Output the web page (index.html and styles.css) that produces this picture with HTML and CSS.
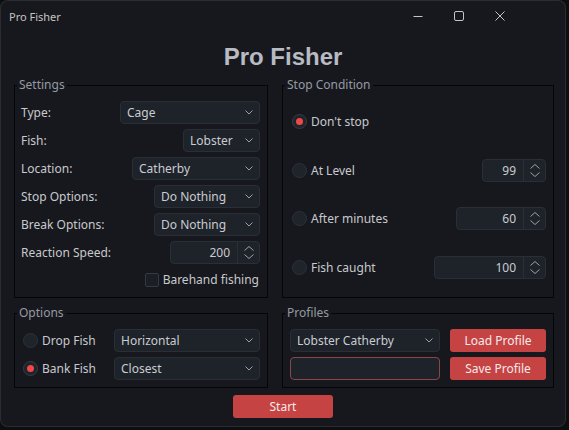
FILE: index.html
```html
<!DOCTYPE html>
<html>
<head>
<meta charset="utf-8">
<title>Pro Fisher</title>
<link rel="stylesheet" href="styles.css">
</head>
<body>
<div class="window">
  <div class="titlebar">
    <span class="title-text">Pro Fisher</span>
    <div class="controls">
      <div class="ctl"><svg width="10" height="10" viewBox="0 0 10 10"><line x1="0.5" y1="5.5" x2="9.5" y2="5.5" stroke="#c4c4c4" stroke-width="1"/></svg></div>
      <div class="ctl"><svg width="10" height="10" viewBox="0 0 10 10"><rect x="0.5" y="0.5" width="9" height="9" rx="1.5" fill="none" stroke="#c4c4c4" stroke-width="1"/></svg></div>
      <div class="ctl"><svg width="10" height="10" viewBox="0 0 10 10"><path d="M0.5 0.5 L9.5 9.5 M9.5 0.5 L0.5 9.5" stroke="#c4c4c4" stroke-width="1"/></svg></div>
    </div>
  </div>

  <h1 class="app-title">Pro Fisher</h1>

  <div class="main">
    <fieldset class="group tall">
      <legend>Settings</legend>
      <div class="settings-inner">
        <div class="row"><span class="label">Type:</span>
          <div class="combo w-type"><span class="val">Cage</span><svg class="chev" viewBox="0 0 8 5"><polyline points="0.5,0.5 4,4 7.5,0.5" fill="none" stroke="#9ca1a9" stroke-width="1"/></svg></div></div>
        <div class="row"><span class="label">Fish:</span>
          <div class="combo w-fish"><span class="val">Lobster</span><svg class="chev" viewBox="0 0 8 5"><polyline points="0.5,0.5 4,4 7.5,0.5" fill="none" stroke="#9ca1a9" stroke-width="1"/></svg></div></div>
        <div class="row"><span class="label">Location:</span>
          <div class="combo w-loc"><span class="val">Catherby</span><svg class="chev" viewBox="0 0 8 5"><polyline points="0.5,0.5 4,4 7.5,0.5" fill="none" stroke="#9ca1a9" stroke-width="1"/></svg></div></div>
        <div class="row"><span class="label">Stop Options:</span>
          <div class="combo w-opt"><span class="val">Do Nothing</span><svg class="chev" viewBox="0 0 8 5"><polyline points="0.5,0.5 4,4 7.5,0.5" fill="none" stroke="#9ca1a9" stroke-width="1"/></svg></div></div>
        <div class="row"><span class="label">Break Options:</span>
          <div class="combo w-opt"><span class="val">Do Nothing</span><svg class="chev" viewBox="0 0 8 5"><polyline points="0.5,0.5 4,4 7.5,0.5" fill="none" stroke="#9ca1a9" stroke-width="1"/></svg></div></div>
        <div class="row"><span class="label">Reaction Speed:</span>
          <div class="spin w-react"><span class="num">200</span>
            <div class="arrows">
              <svg class="sarrow" viewBox="0 0 10 5"><polyline points="0.5,4.5 5,0.5 9.5,4.5" fill="none" stroke="#9ca1a9" stroke-width="1"/></svg>
              <svg class="sarrow" viewBox="0 0 10 5"><polyline points="0.5,0.5 5,4.5 9.5,0.5" fill="none" stroke="#9ca1a9" stroke-width="1"/></svg>
            </div></div></div>
        <div class="check-row"><span class="checkbox"></span><span class="check-label">Barehand fishing</span></div>
      </div>
    </fieldset>

    <fieldset class="group tall">
      <legend>Stop Condition</legend>
      <div class="stop-inner">
        <div class="row"><span class="radio on"></span><span class="radio-label">Don't stop</span></div>
        <div class="row"><span class="radio"></span><span class="radio-label">At Level</span>
          <div class="spin w-level"><span class="num">99</span>
            <div class="arrows">
              <svg class="sarrow" viewBox="0 0 10 5"><polyline points="0.5,4.5 5,0.5 9.5,4.5" fill="none" stroke="#9ca1a9" stroke-width="1"/></svg>
              <svg class="sarrow" viewBox="0 0 10 5"><polyline points="0.5,0.5 5,4.5 9.5,0.5" fill="none" stroke="#9ca1a9" stroke-width="1"/></svg>
            </div></div></div>
        <div class="row"><span class="radio"></span><span class="radio-label">After minutes</span>
          <div class="spin w-min"><span class="num">60</span>
            <div class="arrows">
              <svg class="sarrow" viewBox="0 0 10 5"><polyline points="0.5,4.5 5,0.5 9.5,4.5" fill="none" stroke="#9ca1a9" stroke-width="1"/></svg>
              <svg class="sarrow" viewBox="0 0 10 5"><polyline points="0.5,0.5 5,4.5 9.5,0.5" fill="none" stroke="#9ca1a9" stroke-width="1"/></svg>
            </div></div></div>
        <div class="row"><span class="radio"></span><span class="radio-label">Fish caught</span>
          <div class="spin w-caught"><span class="num">100</span>
            <div class="arrows">
              <svg class="sarrow" viewBox="0 0 10 5"><polyline points="0.5,4.5 5,0.5 9.5,4.5" fill="none" stroke="#9ca1a9" stroke-width="1"/></svg>
              <svg class="sarrow" viewBox="0 0 10 5"><polyline points="0.5,0.5 5,4.5 9.5,0.5" fill="none" stroke="#9ca1a9" stroke-width="1"/></svg>
            </div></div></div>
      </div>
    </fieldset>

    <fieldset class="group short">
      <legend>Options</legend>
      <div class="options-inner">
        <div class="row"><span class="radio"></span><span class="radio-label">Drop Fish</span>
          <div class="combo w-drop"><span class="val">Horizontal</span><svg class="chev" viewBox="0 0 8 5"><polyline points="0.5,0.5 4,4 7.5,0.5" fill="none" stroke="#9ca1a9" stroke-width="1"/></svg></div></div>
        <div class="row"><span class="radio on"></span><span class="radio-label">Bank Fish</span>
          <div class="combo w-drop"><span class="val">Closest</span><svg class="chev" viewBox="0 0 8 5"><polyline points="0.5,0.5 4,4 7.5,0.5" fill="none" stroke="#9ca1a9" stroke-width="1"/></svg></div></div>
      </div>
    </fieldset>

    <fieldset class="group short">
      <legend>Profiles</legend>
      <div class="profiles-inner">
        <div class="combo"><span class="val">Lobster Catherby</span><svg class="chev" viewBox="0 0 8 5"><polyline points="0.5,0.5 4,4 7.5,0.5" fill="none" stroke="#9ca1a9" stroke-width="1"/></svg></div>
        <button class="btn">Load Profile</button>
        <div class="text-input"></div>
        <button class="btn">Save Profile</button>
      </div>
    </fieldset>
  </div>

  <div class="footer"><button class="btn start">Start</button></div>
</div>
</body>
</html>
```
FILE: styles.css
```css
* { box-sizing: border-box; }
html, body { margin: 0; padding: 0; }
body {
  width: 569px;
  height: 430px;
  overflow: hidden;
  background: #0d0e10;
  font-family: "Noto Sans", "Open Sans", sans-serif;
  font-size: 12px;
  color: #c7c9cd;
}
.window {
  width: 566px;
  height: 427px;
  background: #17181d;
  border-radius: 8px;
  box-shadow: inset 0 0 0 1px #2b2c31;
  display: flex;
  flex-direction: column;
}
.titlebar {
  height: 31px;
  display: flex;
  align-items: center;
  padding-left: 9px;
}
.title-text {
  font-size: 11px;
  color: #c4c4c4;
  line-height: 14px;
  padding-top: 2px;
}
.controls {
  margin-left: auto;
  margin-right: 46px;
  display: flex;
}
.ctl {
  width: 41px;
  height: 31px;
  display: flex;
  align-items: center;
  justify-content: center;
}
.app-title {
  margin: 12px 0 6px;
  font: bold 24px/28px "Liberation Sans", Arial, sans-serif;
  color: #b7bbc3;
  text-align: center;
}
.main {
  display: grid;
  grid-template-columns: 254px 272px;
  column-gap: 14px;
  row-gap: 7px;
  padding: 0 12px 0 14px;
}
.group {
  margin: 0;
  padding: 0;
  min-width: 0;
  border: 1px solid #050507;
}
.group legend {
  margin-left: 2px;
  padding: 0 2px;
  font-size: 12px;
  line-height: 16px;
  color: #959aa2;
}
.tall { height: 221px; }
.short { height: 83px; }

.row {
  display: flex;
  align-items: center;
  height: 23px;
}
.settings-inner {
  display: flex;
  flex-direction: column;
  gap: 5px;
  padding: 8px 7px 0 6px;
}
.label { flex: 1; }

.combo {
  height: 23px;
  background: #1e2229;
  border: 1px solid #2a2e36;
  border-radius: 4px;
  display: flex;
  align-items: center;
  padding: 0 6px 0 6px;
  color: #c9ccd1;
  margin-left: auto;
}
.combo .val { flex: 1; white-space: nowrap; }
.chev { width: 8px; height: 5px; flex: none; }
.w-type { width: 140px; }
.w-fish { width: 77px; }
.w-loc { width: 128px; }
.w-opt { width: 106px; }
.w-drop { width: 146px; }

.spin {
  height: 23px;
  background: #1e2229;
  border: 1px solid #2a2e36;
  border-radius: 4px;
  display: flex;
  margin-left: auto;
  color: #c9ccd1;
}
.spin .num {
  flex: 1;
  text-align: right;
  padding-right: 7px;
  line-height: 21px;
}
.spin .arrows {
  width: 22px;
  border-left: 1px solid #2a2e36;
  display: flex;
  flex-direction: column;
  align-items: center;
  justify-content: center;
  gap: 3px;
}
.sarrow { width: 10px; height: 5px; }
.w-react { width: 90px; }
.w-level { width: 64px; }
.w-min { width: 90px; }
.w-caught { width: 112px; }

.check-row {
  display: flex;
  align-items: center;
  justify-content: flex-end;
  height: 14px;
  margin-top: 4px;
  padding-right: 1px;
}
.checkbox {
  width: 14px;
  height: 14px;
  border: 1px solid #34383f;
  background: #1b1e24;
  border-radius: 2px;
  margin-right: 4px;
}
.check-label { line-height: 14px; }

.stop-inner {
  display: flex;
  flex-direction: column;
  gap: 25.5px;
  padding: 17px 7px 0 9px;
}
.radio {
  width: 15px;
  height: 15px;
  flex: none;
  border-radius: 50%;
  border: 1px solid #2d3139;
  background: #1f232a;
  display: flex;
  align-items: center;
  justify-content: center;
}
.radio.on { border-color: #383c44; }
.radio.on::after {
  content: "";
  width: 7px;
  height: 7px;
  border-radius: 50%;
  background: #f04848;
}
.radio-label { margin-left: 4px; white-space: nowrap; }

.options-inner {
  display: flex;
  flex-direction: column;
  gap: 5px;
  padding: 8px 7px 0 8px;
}
.profiles-inner {
  display: grid;
  grid-template-columns: 150px 96px;
  column-gap: 10px;
  row-gap: 5px;
  padding: 8px 7px 0 7px;
}
.profiles-inner .combo { margin-left: 0; }
.text-input {
  height: 23px;
  background: #1e2229;
  border: 1px solid #8a474b;
  border-radius: 4px;
}
.btn {
  height: 23px;
  background: #c64343;
  color: #f4eaea;
  border: none;
  border-radius: 3px;
  font-family: "Noto Sans", "Open Sans", sans-serif;
  font-size: 12px;
  padding: 0;
}
.footer {
  display: flex;
  justify-content: center;
  margin-top: 7px;
}
.start { width: 100px; }
```
